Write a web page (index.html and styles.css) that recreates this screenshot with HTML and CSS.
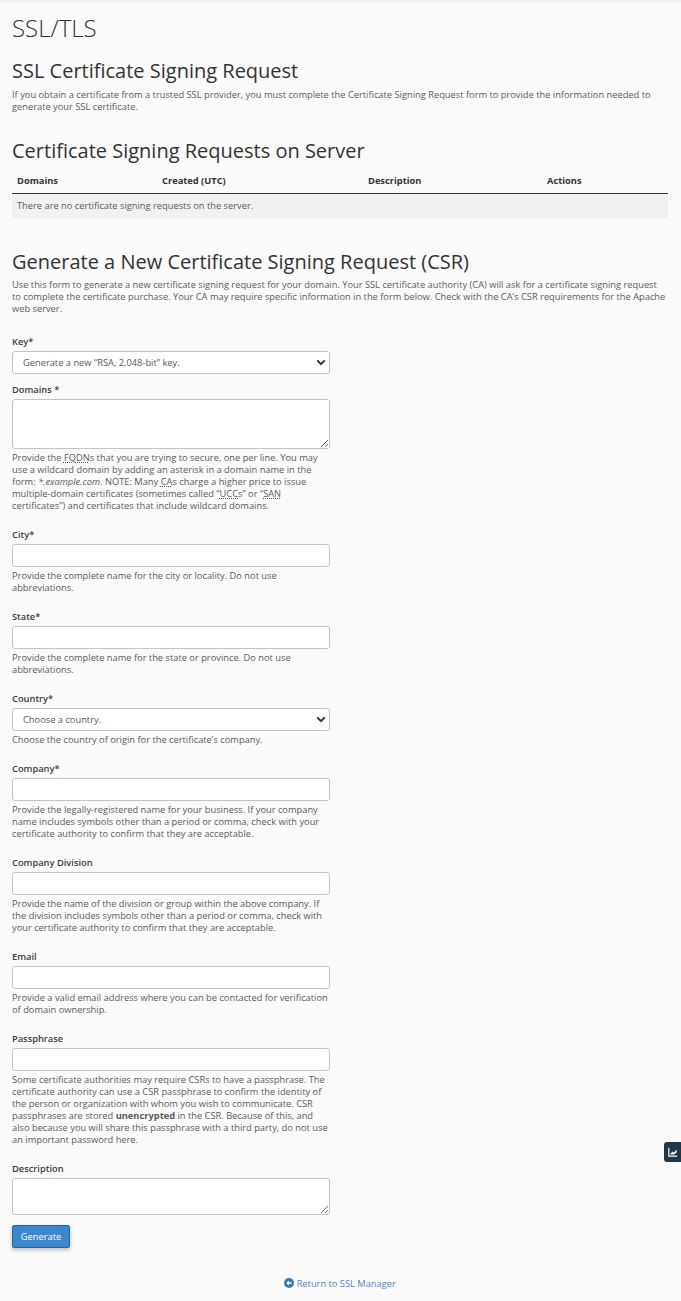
FILE: index.html
```html
<!DOCTYPE html>
<html lang="en">
<head>
  <meta charset="UTF-8">
  <title>SSL/TLS</title>
  <link rel="stylesheet" href="styles.css">
</head>
<body>
  <div class="top-shadow"></div>
  <div class="page">
    <h1 class="page-title">SSL/TLS</h1>
    <h2 class="intro-title">SSL Certificate Signing Request</h2>
    <p class="intro">If you obtain a certificate from a trusted SSL provider, you must complete the Certificate Signing Request form to provide the information needed to generate your SSL certificate.</p>

    <h2 class="list-title">Certificate Signing Requests on Server</h2>
    <table class="csr-table">
      <thead>
        <tr>
          <th class="col-domains">Domains</th>
          <th class="col-created">Created (UTC)</th>
          <th class="col-description">Description</th>
          <th>Actions</th>
        </tr>
      </thead>
      <tbody>
        <tr>
          <td colspan="4">There are no certificate signing requests on the server.</td>
        </tr>
      </tbody>
    </table>

    <h2 class="form-title">Generate a New Certificate Signing Request (CSR)</h2>
    <p class="form-intro">Use this form to generate a new certificate signing request for your domain. Your SSL certificate authority (CA) will ask for a certificate signing request to complete the certificate purchase. Your CA may require specific information in the form below. Check with the CA’s CSR requirements for the Apache web server.</p>

    <form class="csr-form">
      <div class="field field-bare">
        <label for="key">Key*</label>
        <div class="select-wrap">
          <select id="key"><option>Generate a new “RSA, 2,048-bit” key.</option></select>
          <svg class="chevron" viewBox="0 0 12 8"><path d="M1.5 1.5 6 6l4.5-4.5" fill="none" stroke="#333" stroke-width="2.4"/></svg>
        </div>
      </div>
      <div class="field">
        <label for="domains">Domains *</label>
        <textarea id="domains" class="tall"></textarea>
        <p class="help">Provide the <abbr>FQDN</abbr>s that you are trying to secure, one per line. You may use a wildcard domain by adding an asterisk in a domain name in the form: <em>*.example.com</em>. NOTE: Many <abbr>CA</abbr>s charge a higher price to issue multiple-domain certificates (sometimes called “<abbr>UCC</abbr>s” or “<abbr>SAN</abbr> certificates”) and certificates that include wildcard domains.</p>
      </div>
      <div class="field">
        <label for="city">City*</label>
        <input id="city" type="text">
        <p class="help">Provide the complete name for the city or locality. Do not use abbreviations.</p>
      </div>
      <div class="field">
        <label for="state">State*</label>
        <input id="state" type="text">
        <p class="help">Provide the complete name for the state or province. Do not use abbreviations.</p>
      </div>
      <div class="field">
        <label for="country">Country*</label>
        <div class="select-wrap">
          <select id="country"><option>Choose a country.</option></select>
          <svg class="chevron" viewBox="0 0 12 8"><path d="M1.5 1.5 6 6l4.5-4.5" fill="none" stroke="#333" stroke-width="2.4"/></svg>
        </div>
        <p class="help">Choose the country of origin for the certificate’s company.</p>
      </div>
      <div class="field">
        <label for="company">Company*</label>
        <input id="company" type="text">
        <p class="help">Provide the legally-registered name for your business. If your company name includes symbols other than a period or comma, check with your certificate authority to confirm that they are acceptable.</p>
      </div>
      <div class="field">
        <label for="division">Company Division</label>
        <input id="division" type="text">
        <p class="help">Provide the name of the division or group within the above company. If the division includes symbols other than a period or comma, check with your certificate authority to confirm that they are acceptable.</p>
      </div>
      <div class="field">
        <label for="email">Email</label>
        <input id="email" type="text">
        <p class="help">Provide a valid email address where you can be contacted for verification of domain ownership.</p>
      </div>
      <div class="field">
        <label for="passphrase">Passphrase</label>
        <input id="passphrase" type="text">
        <p class="help">Some certificate authorities may require CSRs to have a passphrase. The certificate authority can use a CSR passphrase to confirm the identity of the person or organization with whom you wish to communicate. CSR passphrases are stored <strong>unencrypted</strong> in the CSR. Because of this, and also because you will share this passphrase with a third party, do not use an important password here.</p>
      </div>
      <div class="field field-last">
        <label for="description">Description</label>
        <textarea id="description" class="short"></textarea>
      </div>
      <button type="button" class="btn-generate">Generate</button>
    </form>

    <div class="return-row">
      <a class="return-link" href="#">
        <svg class="return-icon" viewBox="0 0 10 10"><circle cx="5" cy="5" r="5" fill="#337ab7"/><path d="M7.6 4.2H5V2.6L2.2 5 5 7.4V5.8h2.6z" fill="#fff"/></svg>
        Return to SSL Manager
      </a>
    </div>
  </div>

  <div class="stats-tab">
    <svg viewBox="0 0 12 12"><path d="M1 1v10h10" fill="none" stroke="#fff" stroke-width="1.4"/><path d="M3 8l2.4-2.6 1.6 1.4L10.4 3v3.6L7 9H3z" fill="#fff"/></svg>
  </div>
</body>
</html>
```

FILE: styles.css
```css
html, body {
  margin: 0;
  padding: 0;
}
body {
  background: #fafafa;
  color: #5a5a5a;
  font-family: "Open Sans", sans-serif;
  font-size: 9.31px;
  line-height: 12px;
}
.top-shadow {
  height: 2px;
  background: #f3f3f3;
}
.page {
  padding: 0 13px 0 12px;
}
h1, h2 {
  margin: 0;
  font-weight: 400;
  color: #333;
}
.page-title {
  margin-top: 11px;
  font-size: 24px;
  font-weight: 300;
  line-height: 30px;
}
.intro-title {
  margin-top: 15px;
  font-size: 20px;
  line-height: 26px;
}
.intro {
  margin: 5px 0 0;
}
.list-title {
  margin-top: 25px;
  font-size: 20px;
  line-height: 26px;
}
.csr-table {
  width: 100%;
  margin-top: 5px;
  border-collapse: collapse;
  table-layout: fixed;
}
.csr-table th {
  height: 24px;
  padding: 0 5px;
  border-bottom: 1px solid #333;
  color: #333;
  font-weight: 700;
  text-align: left;
}
.col-domains {
  width: 135px;
}
.col-created {
  width: 196px;
}
.col-description {
  width: 169px;
}
.csr-table td {
  height: 24px;
  padding: 0 5px;
  background: #f1f1f1;
}
.form-title {
  margin-top: 31px;
  font-size: 20px;
  line-height: 26px;
}
.form-intro {
  margin: 4px 0 0;
}
.csr-form {
  width: 318px;
  margin-top: 21px;
}
.field {
  margin-bottom: 17px;
}
.field label {
  display: block;
  margin-bottom: 3px;
  color: #3c3c3c;
  font-weight: 600;
}
.field-bare {
  margin-bottom: 10px;
}
.field-last {
  margin-bottom: 10px;
}
input, select, textarea {
  display: block;
  width: 100%;
  box-sizing: border-box;
  border: 1px solid #c4c4c4;
  border-radius: 3px;
  background: #fff;
  font-family: inherit;
  font-size: 9.31px;
  color: #5a5a5a;
}
input {
  height: 23px;
}
select {
  height: 23px;
  padding: 0 10px;
  appearance: none;
  -webkit-appearance: none;
}
textarea {
  margin: 0;
  resize: vertical;
}
.tall {
  height: 50px;
}
.short {
  height: 37px;
}
.select-wrap {
  position: relative;
}
.chevron {
  position: absolute;
  top: 8px;
  right: 4px;
  width: 10px;
  height: 7px;
}
.help {
  margin: 3px 0 0;
}
abbr {
  text-decoration: underline dotted #555;
}
.btn-generate {
  display: block;
  width: 58px;
  height: 23px;
  padding: 0;
  border: 1px solid #2a6496;
  border-radius: 2px;
  background: #3a87ce;
  color: #fff;
  font-family: inherit;
  font-size: 9.31px;
  font-weight: 400;
  box-shadow: 0 2px 4px rgba(0,0,0,0.25);
}
.return-row {
  margin-top: 30px;
  text-align: center;
}
.return-link {
  color: #4f86c6;
  text-decoration: none;
}
.return-icon {
  width: 10px;
  height: 10px;
  vertical-align: -1px;
}
.stats-tab {
  position: absolute;
  top: 1142px;
  right: 0;
  width: 17px;
  height: 20px;
  display: flex;
  align-items: center;
  justify-content: center;
  background: #233648;
  border-radius: 3px 0 0 3px;
}
.stats-tab svg {
  width: 10px;
  height: 10px;
}
```
